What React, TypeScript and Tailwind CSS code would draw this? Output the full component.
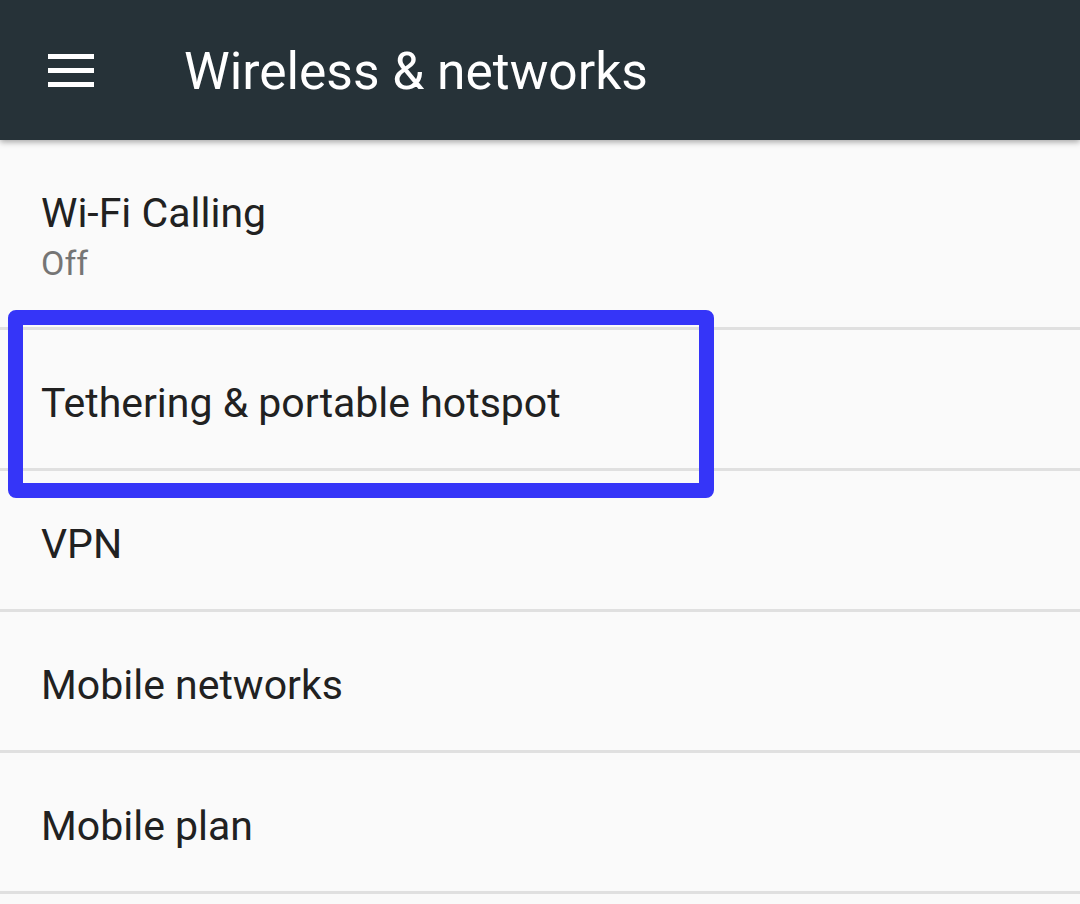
import React from 'react';

const rows = ['Tethering & portable hotspot', 'VPN', 'Mobile networks', 'Mobile plan'];

export default function App() {
  return (
    <div className="relative w-[1080px] h-[904px] overflow-hidden bg-[#fafafa] font-['Roboto',sans-serif]">
      <header className="relative z-10 flex items-center h-[140px] bg-[#263238] shadow-[0_2px_6px_rgba(0,0,0,0.35)]">
        <div className="flex flex-col gap-[9px] ml-[48px] mt-[1px] w-[46px]">
          <span className="block h-[5px] bg-white" />
          <span className="block h-[5px] bg-white" />
          <span className="block h-[5px] bg-white" />
        </div>
        <h1 className="ml-[90px] pt-[4px] text-white text-[51.5px] leading-none">Wireless &amp; networks</h1>
      </header>

      <div className="flex flex-col">
        <div className="flex flex-col justify-center h-[190px] pl-[41px] pt-[4px] border-b-[3px] border-[#e0e0e0]">
          <div className="text-[#212121] text-[41px] leading-[54px]">Wi-Fi Calling</div>
          <div className="text-[#757575] text-[34px] leading-[46px]">Off</div>
        </div>
        {rows.map((r) => (
          <div
            key={r}
            className="flex items-center h-[141px] pl-[41px] pt-[10px] border-b-[3px] border-[#e0e0e0] text-[#212121] text-[41px]"
          >
            {r}
          </div>
        ))}
      </div>

      <div className="absolute left-[8px] top-[310px] w-[706px] h-[188px] border-[15px] border-[#3535f8] rounded-[8px]" />
    </div>
  );
}
